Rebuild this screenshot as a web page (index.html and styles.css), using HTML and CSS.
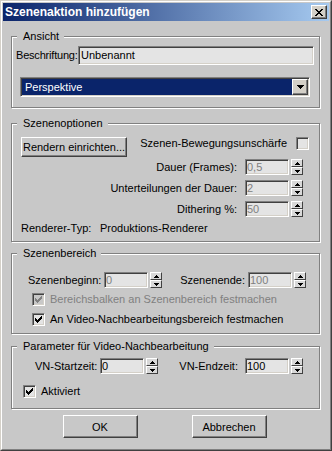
FILE: index.html
```html
<!DOCTYPE html>
<html lang="de">
<head>
<meta charset="utf-8">
<title>Szenenaktion hinzufügen</title>
<link rel="stylesheet" href="styles.css">
</head>
<body>
<div class="window">
<div class="frame">
  <div class="titlebar">
    <span class="title">Szenenaktion hinzufügen</span>
    <button class="close" aria-label="Schließen"><svg width="8" height="7" viewBox="0 0 8 7"><path d="M0 0h2v1H0zM6 0h2v1H6zM1 1h2v1H1zM5 1h2v1H5zM2 2h4v1H2zM3 3h2v1H3zM2 4h4v1H2zM1 5h2v1H1zM5 5h2v1H5zM0 6h2v1H0zM6 6h2v1H6z"/></svg></button>
  </div>
  <div class="content">
    <section class="group g-view">
      <span class="legend">Ansicht</span>
      <div class="cap-row">
        <span class="cap-label">Beschriftung:</span>
        <span class="field field-cap">Unbenannt</span>
      </div>
      <div class="select">
        <span class="select-text">Perspektive</span>
        <span class="select-btn"><svg width="7" height="4" viewBox="0 0 7 4"><path d="M0 0h7v1H0zM1 1h5v1H1zM2 2h3v1H2zM3 3h1v1H3z"/></svg></span>
      </div>
    </section>

    <section class="group g-opts">
      <span class="legend">Szenenoptionen</span>
      <div class="opt-top">
        <button class="btn btn-render">Rendern einrichten...</button>
        <span class="blur-label">Szenen-Bewegungsunschärfe</span>
        <span class="cb"></span>
      </div>
      <div class="spin-row first">
        <span class="spin-label">Dauer (Frames):</span>
        <span class="field spin-field off">0,5</span>
        <span class="spin"><span class="spin-up"><svg width="5" height="3" viewBox="0 0 5 3"><path d="M2 0h1v1H2zM1 1h3v1H1zM0 2h5v1H0z"/></svg></span><span class="spin-dn"><svg width="5" height="3" viewBox="0 0 5 3"><path d="M0 0h5v1H0zM1 1h3v1H1zM2 2h1v1H2z"/></svg></span></span>
      </div>
      <div class="spin-row">
        <span class="spin-label">Unterteilungen der Dauer:</span>
        <span class="field spin-field off">2</span>
        <span class="spin"><span class="spin-up"><svg width="5" height="3" viewBox="0 0 5 3"><path d="M2 0h1v1H2zM1 1h3v1H1zM0 2h5v1H0z"/></svg></span><span class="spin-dn"><svg width="5" height="3" viewBox="0 0 5 3"><path d="M0 0h5v1H0zM1 1h3v1H1zM2 2h1v1H2z"/></svg></span></span>
      </div>
      <div class="spin-row">
        <span class="spin-label">Dithering %:</span>
        <span class="field spin-field off">50</span>
        <span class="spin"><span class="spin-up"><svg width="5" height="3" viewBox="0 0 5 3"><path d="M2 0h1v1H2zM1 1h3v1H1zM0 2h5v1H0z"/></svg></span><span class="spin-dn"><svg width="5" height="3" viewBox="0 0 5 3"><path d="M0 0h5v1H0zM1 1h3v1H1zM2 2h1v1H2z"/></svg></span></span>
      </div>
      <div class="renderer-row">
        <span class="renderer-label">Renderer-Typ:</span>
        <span>Produktions-Renderer</span>
      </div>
    </section>

    <section class="group g-range">
      <span class="legend">Szenenbereich</span>
      <div class="range-row">
        <span class="range-start-label">Szenenbeginn:</span>
        <span class="field spin-field off">0</span>
        <span class="spin"><span class="spin-up"><svg width="5" height="3" viewBox="0 0 5 3"><path d="M2 0h1v1H2zM1 1h3v1H1zM0 2h5v1H0z"/></svg></span><span class="spin-dn"><svg width="5" height="3" viewBox="0 0 5 3"><path d="M0 0h5v1H0zM1 1h3v1H1zM2 2h1v1H2z"/></svg></span></span>
        <span class="range-end-label">Szenenende:</span>
        <span class="field spin-field off">100</span>
        <span class="spin"><span class="spin-up"><svg width="5" height="3" viewBox="0 0 5 3"><path d="M2 0h1v1H2zM1 1h3v1H1zM0 2h5v1H0z"/></svg></span><span class="spin-dn"><svg width="5" height="3" viewBox="0 0 5 3"><path d="M0 0h5v1H0zM1 1h3v1H1zM2 2h1v1H2z"/></svg></span></span>
      </div>
      <div class="check-row first">
        <span class="cb cb-off"><svg width="7" height="7" viewBox="0 0 7 7"><path d="M6 0h1v1H6zM5 1h2v1H5zM0 2h1v1H0zM4 2h3v1H4zM0 3h2v1H0zM3 3h3v1H3zM0 4h5v1H0zM1 5h3v1H1zM2 6h1v1H2z"/></svg></span>
        <span class="off">Bereichsbalken an Szenenbereich festmachen</span>
      </div>
      <div class="check-row">
        <span class="cb"><svg width="7" height="7" viewBox="0 0 7 7"><path d="M6 0h1v1H6zM5 1h2v1H5zM0 2h1v1H0zM4 2h3v1H4zM0 3h2v1H0zM3 3h3v1H3zM0 4h5v1H0zM1 5h3v1H1zM2 6h1v1H2z"/></svg></span>
        <span>An Video-Nachbearbeitungsbereich festmachen</span>
      </div>
    </section>

    <section class="group g-vn">
      <span class="legend">Parameter für Video-Nachbearbeitung</span>
      <div class="vn-row">
        <span class="vn-start-label">VN-Startzeit:</span>
        <span class="field spin-field">0</span>
        <span class="spin"><span class="spin-up"><svg width="5" height="3" viewBox="0 0 5 3"><path d="M2 0h1v1H2zM1 1h3v1H1zM0 2h5v1H0z"/></svg></span><span class="spin-dn"><svg width="5" height="3" viewBox="0 0 5 3"><path d="M0 0h5v1H0zM1 1h3v1H1zM2 2h1v1H2z"/></svg></span></span>
        <span class="vn-end-label">VN-Endzeit:</span>
        <span class="field spin-field">100</span>
        <span class="spin"><span class="spin-up"><svg width="5" height="3" viewBox="0 0 5 3"><path d="M2 0h1v1H2zM1 1h3v1H1zM0 2h5v1H0z"/></svg></span><span class="spin-dn"><svg width="5" height="3" viewBox="0 0 5 3"><path d="M0 0h5v1H0zM1 1h3v1H1zM2 2h1v1H2z"/></svg></span></span>
      </div>
      <div class="check-row vn-check">
        <span class="cb"><svg width="7" height="7" viewBox="0 0 7 7"><path d="M6 0h1v1H6zM5 1h2v1H5zM0 2h1v1H0zM4 2h3v1H4zM0 3h2v1H0zM3 3h3v1H3zM0 4h5v1H0zM1 5h3v1H1zM2 6h1v1H2z"/></svg></span>
        <span>Aktiviert</span>
      </div>
    </section>

    <div class="actions">
      <button class="btn btn-action">OK</button>
      <button class="btn btn-action">Abbrechen</button>
    </div>
  </div>
</div>
</div>
</body>
</html>
```

FILE: styles.css
```css
* { box-sizing: border-box; }
html, body { margin: 0; padding: 0; }
body {
  width: 332px;
  height: 451px;
  overflow: hidden;
  background: #c8c8c8;
  color: #000;
  font-family: "Liberation Sans", Arial, sans-serif;
  font-size: 11px;
  line-height: 13px;
}
button {
  font: inherit;
  color: inherit;
  margin: 0;
  padding: 0;
  -webkit-appearance: none;
  appearance: none;
}
svg { display: block; fill: #000; }

.window {
  width: 332px;
  height: 451px;
  border: 1px solid;
  border-color: #d4d0c8 #404040 #404040 #d4d0c8;
}
.frame {
  height: 100%;
  padding: 1px;
  border: 1px solid;
  border-color: #fff #808080 #808080 #fff;
  background: #c8c8c8;
  display: flex;
  flex-direction: column;
}

.titlebar {
  flex: none;
  height: 18px;
  display: flex;
  align-items: center;
  justify-content: space-between;
  padding: 0 2px;
  background: linear-gradient(to right, #0a246a, #a6caf0);
}
.title {
  color: #fff;
  font-weight: bold;
  font-size: 12px;
  line-height: 14px;
  white-space: nowrap;
}
.close {
  width: 16px;
  height: 14px;
  display: flex;
  align-items: center;
  justify-content: center;
  background: #d4d0c8;
  border: 1px solid;
  border-color: #fff #404040 #404040 #fff;
  box-shadow: inset -1px -1px 0 #808080;
}

.content {
  flex: 1;
  display: flex;
  flex-direction: column;
  padding: 0 9px 0 8px;
}

.group {
  position: relative;
  border: 1px solid #808080;
  box-shadow: inset 1px 1px 0 #fff, 1px 1px 0 #fff;
}
.legend {
  position: absolute;
  top: -7px;
  left: 5px;
  padding: 0 5px 0 6px;
  background: #c8c8c8;
  line-height: 13px;
  white-space: nowrap;
}

.field {
  flex: none;
  background: #e4e4e4;
  border: 1px solid;
  border-color: #808080 #fff #fff #808080;
  box-shadow: inset 1px 1px 0 #404040, inset -1px -1px 0 #d4d0c8;
  white-space: nowrap;
  overflow: hidden;
}
.off { color: #808080; }

.btn {
  background: #c8c8c8;
  border: 1px solid;
  border-color: #fff #404040 #404040 #fff;
  box-shadow: inset -1px -1px 0 #808080;
  text-align: center;
  white-space: nowrap;
}

.cb {
  flex: none;
  width: 13px;
  height: 13px;
  display: flex;
  align-items: center;
  justify-content: center;
  background: #e4e4e4;
  border: 1px solid;
  border-color: #808080 #fff #fff #808080;
  box-shadow: inset 1px 1px 0 #404040, inset -1px -1px 0 #d4d0c8;
}
.cb-off { background: #c8c8c8; }
.cb-off svg { fill: #808080; }

.spin {
  flex: none;
  width: 12px;
  height: 16px;
  margin-left: 2px;
  display: flex;
  flex-direction: column;
}
.spin-up, .spin-dn {
  flex: 1;
  display: flex;
  align-items: center;
  justify-content: center;
  background: #d8d8d8;
  border: 1px solid;
  border-color: #fff #404040 #404040 #fff;
}
.spin-field {
  width: 44px;
  height: 16px;
  padding-left: 1px;
  line-height: 14px;
}

/* Ansicht */
.g-view {
  margin-top: 15px;
  padding: 9px 5px 10px 4px;
}
.cap-row {
  display: flex;
  align-items: center;
  height: 19px;
}
.cap-label {
  flex: none;
  width: 62px;
  letter-spacing: -0.2px;
  white-space: nowrap;
}
.field-cap {
  flex: 1;
  height: 19px;
  padding-left: 2px;
  line-height: 17px;
}
.select {
  margin: 12px 4px 0 4px;
  height: 20px;
  display: flex;
  padding: 1px;
  background: #0a246a;
  border: 1px solid;
  border-color: #808080 #fff #fff #808080;
  box-shadow: inset 1px 1px 0 #404040, inset -1px -1px 0 #d4d0c8;
}
.select-text {
  flex: 1;
  color: #fff;
  padding-left: 3px;
  line-height: 16px;
}
.select-btn {
  flex: none;
  width: 16px;
  display: flex;
  align-items: center;
  justify-content: center;
  background: #d4d0c8;
  border: 1px solid;
  border-color: #fff #404040 #404040 #fff;
  box-shadow: inset -1px -1px 0 #808080;
}

/* Szenenoptionen */
.g-opts {
  margin-top: 15px;
  padding: 13px 10px 6px 9px;
}
.opt-top {
  display: flex;
  align-items: flex-start;
}
.btn-render {
  width: 106px;
  height: 20px;
  line-height: 17px;
}
.blur-label {
  flex: 1;
  text-align: right;
  margin-right: 9px;
  white-space: nowrap;
}
.spin-row {
  display: flex;
  justify-content: flex-end;
  align-items: center;
  height: 16px;
  margin: 5px 6px 0 0;
}
.spin-row.first { margin-top: 2px; }
.spin-label {
  margin-right: 8px;
  white-space: nowrap;
}
.renderer-row {
  display: flex;
  margin-top: 5px;
  white-space: nowrap;
}
.renderer-label {
  flex: none;
  width: 79px;
}

/* Szenenbereich */
.g-range {
  margin-top: 11px;
  padding: 18px 13px 4px 16px;
}
.range-row {
  display: flex;
  align-items: center;
  height: 16px;
}
.range-start-label {
  flex: none;
  width: 76px;
  white-space: nowrap;
}
.range-end-label {
  flex: 1;
  text-align: right;
  padding-right: 3px;
  white-space: nowrap;
}
.check-row {
  display: flex;
  align-items: center;
  height: 20px;
  padding-left: 4px;
  white-space: nowrap;
}
.check-row .cb { margin-right: 5px; }
.check-row.first { margin-top: 1px; }

/* Video-Nachbearbeitung */
.g-vn {
  margin-top: 12px;
  padding: 11px 16px 7px 11px;
}
.vn-row {
  display: flex;
  align-items: center;
  height: 16px;
  padding-left: 12px;
}
.vn-start-label {
  flex: none;
  width: 65px;
  white-space: nowrap;
}
.vn-end-label {
  flex: 1;
  text-align: right;
  padding-right: 7px;
  white-space: nowrap;
}
.vn-check {
  margin-top: 7px;
  padding-left: 0;
}

/* Buttons */
.actions {
  display: flex;
  justify-content: center;
  gap: 54px;
  margin-top: 6px;
  padding-right: 2px;
}
.btn-action {
  width: 75px;
  height: 23px;
  line-height: 20px;
}
```
